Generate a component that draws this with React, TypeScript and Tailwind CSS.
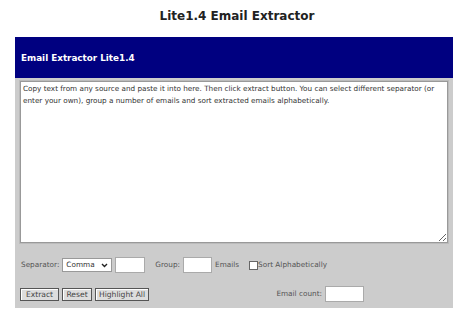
import React from 'react';

export default function App() {
  const font = { fontFamily: '"DejaVu Sans", Verdana, sans-serif' };
  return (
    <div className="min-h-[310px] bg-white overflow-hidden" style={font}>
      <h1 className="text-center text-[12px] font-bold text-[#222] pt-[8px] leading-[16px]">
        Lite1.4 Email Extractor
      </h1>
      <div className="ml-[15px] w-[438px] mt-[13px] bg-[#cccccc]">
        <div className="bg-[#000080] h-[41px] flex items-center pl-[6px] pt-[3px]">
          <span className="text-white font-bold text-[8.8px]">Email Extractor Lite1.4</span>
        </div>
        <div className="px-[5px] pt-[3px] pb-[6px]">
          <textarea
            className="block w-[428px] h-[162px] bg-white border border-[#999] outline outline-1 outline-[#bbb] text-[7.25px] leading-[12px] text-[#333] px-[2px] py-[1px] resize-y"
            style={font}
            defaultValue="Copy text from any source and paste it into here. Then click extract button. You can select different separator (or enter your own), group a number of emails and sort extracted emails alphabetically."
          />
          <div className="flex items-center mt-[14px] h-[16px] text-[7.3px] text-[#555]">
            <span className="ml-[1px]">Separator:</span>
            <div className="ml-[3px] w-[50px] h-[14px] bg-white border border-[#999] flex items-center justify-between px-[3px] text-[#333]">
              <span>Comma</span>
              <svg width="7" height="5" viewBox="0 0 7 5">
                <path d="M1 1 L3.5 3.5 L6 1" stroke="#222" strokeWidth="1.4" fill="none" />
              </svg>
            </div>
            <div className="ml-[3px] w-[30px] h-[16px] bg-white border border-[#aaa]" />
            <span className="ml-[10px]">Group:</span>
            <div className="ml-[3px] w-[29px] h-[16px] bg-white border border-[#aaa]" />
            <span className="ml-[3px]">Emails</span>
            <div className="ml-[10px] w-[9px] h-[9px] bg-white border border-[#666]" />
            <span>Sort Alphabetically</span>
          </div>
          <div className="flex items-center mt-[13px] h-[16px] text-[7.6px] text-[#444]">
            <button className="w-[39px] h-[13px] border border-[#555] bg-[#ddd] shadow-[inset_1px_1px_0_#fff]">Extract</button>
            <button className="ml-[3px] w-[30px] h-[13px] border border-[#555] bg-[#ddd] shadow-[inset_1px_1px_0_#fff]">Reset</button>
            <button className="ml-[3px] w-[54px] h-[13px] border border-[#555] bg-[#ddd] shadow-[inset_1px_1px_0_#fff]">Highlight All</button>
            <span className="ml-auto mr-[3px] text-[7.3px] text-[#555]">Email count:</span>
            <div className="w-[39px] h-[16px] bg-white border border-[#aaa] mr-[84px]" />
          </div>
        </div>
      </div>
      <div className="text-center text-[7px] text-[#aaa] mt-[1px]">Text to Email Extractor</div>
    </div>
  );
}
